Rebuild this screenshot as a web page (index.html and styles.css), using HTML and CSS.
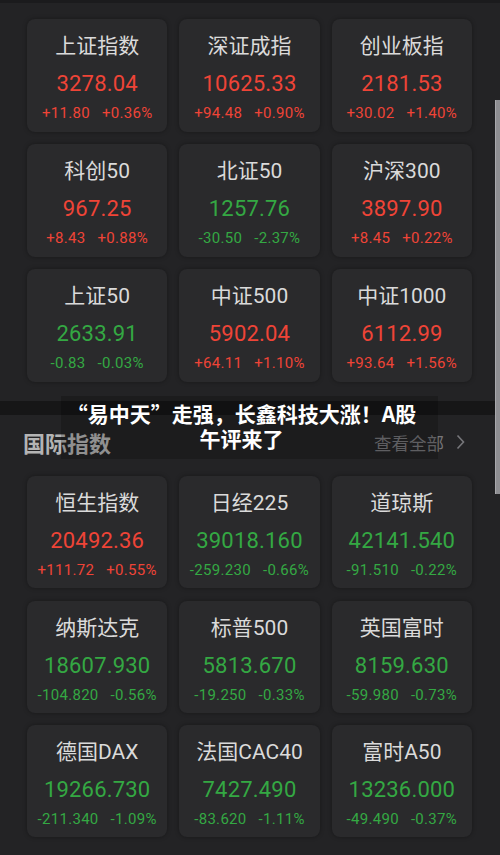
FILE: index.html
```html
<!DOCTYPE html>
<html lang="zh-CN">
<head>
  <meta charset="UTF-8">
  <title>指数行情</title>
  <link rel="stylesheet" href="styles.css">
</head>
<body>

  <!-- 国内指数 -->
  <section class="grid grid-home">
    <div class="card">
      <div class="name">上证指数</div>
      <div class="value up">3278.04</div>
      <div class="change up"><span>+11.80</span><span>+0.36%</span></div>
    </div>
    <div class="card">
      <div class="name">深证成指</div>
      <div class="value up">10625.33</div>
      <div class="change up"><span>+94.48</span><span>+0.90%</span></div>
    </div>
    <div class="card">
      <div class="name">创业板指</div>
      <div class="value up">2181.53</div>
      <div class="change up"><span>+30.02</span><span>+1.40%</span></div>
    </div>
    <div class="card">
      <div class="name">科创50</div>
      <div class="value up">967.25</div>
      <div class="change up"><span>+8.43</span><span>+0.88%</span></div>
    </div>
    <div class="card">
      <div class="name">北证50</div>
      <div class="value down">1257.76</div>
      <div class="change down"><span>-30.50</span><span>-2.37%</span></div>
    </div>
    <div class="card">
      <div class="name">沪深300</div>
      <div class="value up">3897.90</div>
      <div class="change up"><span>+8.45</span><span>+0.22%</span></div>
    </div>
    <div class="card">
      <div class="name">上证50</div>
      <div class="value down">2633.91</div>
      <div class="change down"><span>-0.83</span><span>-0.03%</span></div>
    </div>
    <div class="card">
      <div class="name">中证500</div>
      <div class="value up">5902.04</div>
      <div class="change up"><span>+64.11</span><span>+1.10%</span></div>
    </div>
    <div class="card">
      <div class="name">中证1000</div>
      <div class="value up">6112.99</div>
      <div class="change up"><span>+93.64</span><span>+1.56%</span></div>
    </div>
  </section>

  <!-- 国际指数 -->
  <div class="section-head">
    <span class="section-title">国际指数</span>
    <a class="more">查看全部
      <svg width="9" height="16" viewBox="0 0 9 16"><polyline points="1.5,1.5 7.5,8 1.5,14.5" fill="none" stroke="currentColor" stroke-width="1.6"/></svg>
    </a>
  </div>

  <section class="grid grid-world">
    <div class="card">
      <div class="name">恒生指数</div>
      <div class="value up">20492.36</div>
      <div class="change up"><span>+111.72</span><span>+0.55%</span></div>
    </div>
    <div class="card">
      <div class="name">日经225</div>
      <div class="value down">39018.160</div>
      <div class="change down"><span>-259.230</span><span>-0.66%</span></div>
    </div>
    <div class="card">
      <div class="name">道琼斯</div>
      <div class="value down">42141.540</div>
      <div class="change down"><span>-91.510</span><span>-0.22%</span></div>
    </div>
    <div class="card">
      <div class="name">纳斯达克</div>
      <div class="value down">18607.930</div>
      <div class="change down"><span>-104.820</span><span>-0.56%</span></div>
    </div>
    <div class="card">
      <div class="name">标普500</div>
      <div class="value down">5813.670</div>
      <div class="change down"><span>-19.250</span><span>-0.33%</span></div>
    </div>
    <div class="card">
      <div class="name">英国富时</div>
      <div class="value down">8159.630</div>
      <div class="change down"><span>-59.980</span><span>-0.73%</span></div>
    </div>
    <div class="card">
      <div class="name">德国DAX</div>
      <div class="value down">19266.730</div>
      <div class="change down"><span>-211.340</span><span>-1.09%</span></div>
    </div>
    <div class="card">
      <div class="name">法国CAC40</div>
      <div class="value down">7427.490</div>
      <div class="change down"><span>-83.620</span><span>-1.11%</span></div>
    </div>
    <div class="card">
      <div class="name">富时A50</div>
      <div class="value down">13236.000</div>
      <div class="change down"><span>-49.490</span><span>-0.37%</span></div>
    </div>
  </section>

  <!-- 悬浮标题条 -->
  <div class="caption-strip"></div>
  <div class="caption">“易中天”走强，长鑫科技大涨！A股午评来了</div>

  <!-- 滚动条 -->
  <div class="scrollbar"></div>

</body>
</html>
```

FILE: styles.css
```css
/* 基础 */
body {
  margin: 0;
  padding: 0;
  background: #232325;
  border-top: 3px solid #1b1b1d;
  font-family: "Roboto", "Noto Sans CJK SC", sans-serif;
  color: #d9d9d9;
  width: 500px;
  height: 852px;
  overflow: hidden;
}

/* 卡片网格 */
.grid {
  display: grid;
  grid-template-columns: repeat(3, 1fr);
  column-gap: 12px;
  width: 445px;
  margin-left: 27px;
}
.grid-home {
  margin-top: 16px;
  grid-auto-rows: 113px;
  row-gap: 12px;
}
.grid-world {
  margin-top: 19px;
  grid-auto-rows: 112px;
  row-gap: 12.5px;
}

.card {
  background: #2a2a2c;
  border-radius: 8px;
  box-shadow: 0 0 4px rgba(0, 0, 0, 0.35);
  display: flex;
  flex-direction: column;
  align-items: center;
  padding-top: 14px;
  box-sizing: border-box;
}

.name {
  font-size: 21px;
  line-height: 26px;
  color: #dadada;
}
.value {
  font-size: 22px;
  line-height: 28px;
  margin-top: 11px;
  letter-spacing: 0.2px;
}
.change {
  font-size: 15px;
  line-height: 20px;
  margin-top: 5px;
  letter-spacing: 0.3px;
  display: flex;
  gap: 12px;
}

.up { color: #ef4437; }
.down { color: #34a843; }

/* 国际指数标题 */
.section-head {
  display: flex;
  justify-content: space-between;
  align-items: center;
  margin-top: 45px;
  height: 30px;
  padding: 0 35px 0 23px;
}
.section-title {
  font-size: 22px;
  font-weight: bold;
  color: #b4b4b4;
}
.more {
  display: flex;
  align-items: center;
  gap: 12px;
  font-size: 17.5px;
  color: #76767a;
}

/* 悬浮标题 */
.caption-strip {
  position: absolute;
  left: 0;
  top: 401px;
  width: 500px;
  height: 14px;
  background: rgba(0, 0, 0, 0.37);
}
.caption {
  position: absolute;
  left: 61px;
  top: 396px;
  width: 377px;
  height: 63px;
  box-sizing: border-box;
  padding: 5px 18px 0 2px;
  background: rgba(0, 0, 0, 0.2);
  font-family: "Noto Sans CJK SC", sans-serif;
  font-weight: bold;
  font-size: 21px;
  line-height: 25px;
  color: #fff;
  text-align: center;
}

/* 滚动条 */
.scrollbar {
  position: absolute;
  right: 0;
  top: 100px;
  width: 5px;
  height: 394px;
  background: #8e8e92;
  border-left: 1px solid #a8a8ac;
  box-sizing: border-box;
}
```
